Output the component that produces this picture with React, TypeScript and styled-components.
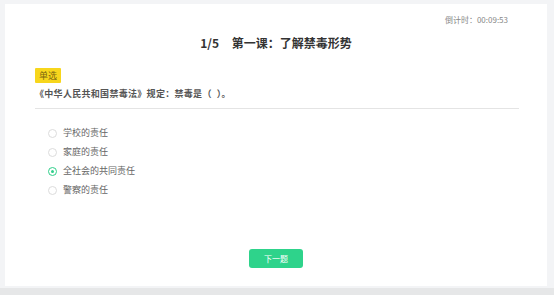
import React from 'react';
import styled, { createGlobalStyle } from 'styled-components';

const GlobalStyle = createGlobalStyle`
  html, body {
    margin: 0;
    padding: 0;
    background: #f3f4f6;
    font-family: "Noto Sans CJK SC", "Noto Sans", sans-serif;
  }
`;

const Page = styled.div`
  width: 554px;
  height: 295px;
  display: flex;
  flex-direction: column;
  overflow: hidden;
`;

const Card = styled.div`
  margin: 4px 7px 0 5px;
  height: 282px;
  background: #fff;
  display: flex;
  flex-direction: column;
  padding: 0 30px;
  box-sizing: border-box;
`;

const Footer = styled.div`
  margin-top: 2px;
  flex: 1;
  background: #e6e7e8;
`;

const Timer = styled.div`
  align-self: flex-end;
  margin-top: 10px;
  margin-right: 9px;
  font-size: 8px;
  line-height: 12px;
  color: #888;
`;

const Title = styled.h1`
  margin: 8px 0 0;
  text-align: center;
  font-size: 12px;
  line-height: 18px;
  font-weight: 700;
  color: #333;
  word-spacing: 10px;
`;

const Badge = styled.span`
  align-self: flex-start;
  margin-top: 16px;
  background: #f7d61c;
  color: #7a6410;
  font-size: 9px;
  line-height: 15px;
  padding: 0 4px;
  border-radius: 1px;
`;

const Question = styled.div`
  margin-top: 4px;
  padding-bottom: 8px;
  border-bottom: 1px solid #e4e4e4;
  font-size: 9px;
  line-height: 13px;
  color: #555;
  font-weight: 600;
  letter-spacing: 0.3px;
  margin-right: -2px;
`;

const Gap = styled.span`
  display: inline-block;
  width: 5px;
`;

const Options = styled.div`
  margin-top: 17px;
  padding-left: 13px;
  display: flex;
  flex-direction: column;
  gap: 5px;
`;

const Option = styled.label`
  display: flex;
  align-items: center;
  gap: 6px;
  font-size: 9px;
  line-height: 14px;
  color: #666;
`;

const Radio = styled.span<{ checked?: boolean }>`
  width: 7px;
  height: 7px;
  border-radius: 50%;
  border: 1px solid ${p => (p.checked ? '#2fcf8a' : '#dcdcdc')};
  display: flex;
  align-items: center;
  justify-content: center;
  &::after {
    content: '';
    width: 3px;
    height: 3px;
    border-radius: 50%;
    background: ${p => (p.checked ? '#2fcf8a' : 'transparent')};
  }
`;

const ButtonRow = styled.div`
  margin-top: auto;
  margin-bottom: 18px;
  display: flex;
  justify-content: center;
`;

const NextButton = styled.button`
  width: 54px;
  height: 19px;
  border: none;
  border-radius: 3px;
  background: #2ed38b;
  color: #fff;
  font-family: inherit;
  font-size: 8px;
  padding: 0;
`;

const options = ['学校的责任', '家庭的责任', '全社会的共同责任', '警察的责任'];

export default function App() {
  return (
    <Page>
      <GlobalStyle />
      <Card>
        <Timer>倒计时：00:09:53</Timer>
        <Title>1/5 第一课：了解禁毒形势</Title>
        <Badge>单选</Badge>
        <Question>
          《中华人民共和国禁毒法》规定：禁毒是（<Gap />）。
        </Question>
        <Options>
          {options.map((o, i) => (
            <Option key={o}>
              <Radio checked={i === 2} />
              {o}
            </Option>
          ))}
        </Options>
        <ButtonRow>
          <NextButton>下一题</NextButton>
        </ButtonRow>
      </Card>
      <Footer />
    </Page>
  );
}
